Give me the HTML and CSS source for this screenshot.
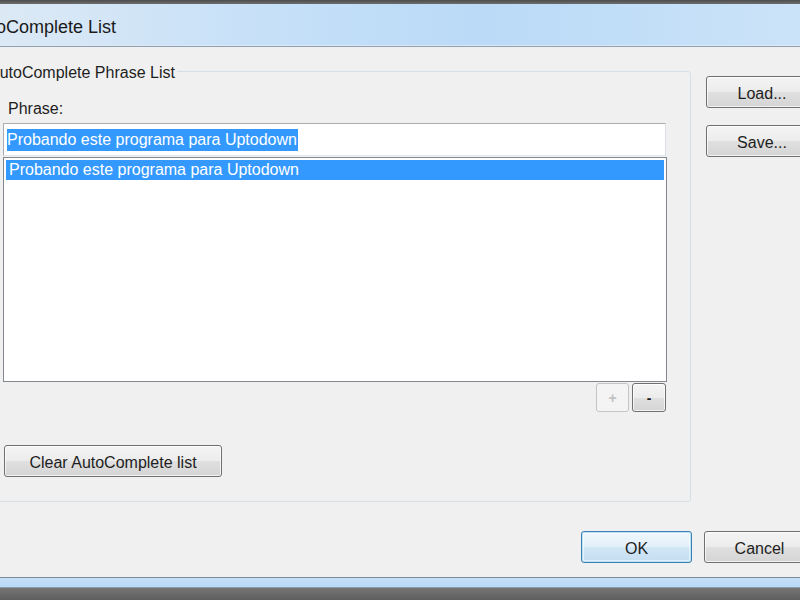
FILE: index.html
```html
<!DOCTYPE html>
<html>
<head>
<meta charset="utf-8">
<link rel="stylesheet" href="styles.css">
</head>
<body>
<div class="frame-top"></div>
<div class="titlebar"><span class="title">AutoComplete List</span></div>
<div class="client">
  <div class="main">
    <fieldset class="group">
      <legend class="group-label">AutoComplete Phrase List</legend>
      <div class="field-label">Phrase:</div>
      <div class="textbox"><span class="sel">Probando este programa para Uptodown</span></div>
      <div class="listbox">
        <div class="list-item selected">Probando este programa para Uptodown</div>
      </div>
      <div class="pm-row">
        <button class="btn small disabled">+</button>
        <button class="btn small">-</button>
      </div>
      <button class="btn clear">Clear AutoComplete list</button>
    </fieldset>
    <div class="side">
      <button class="btn side-btn">Load...</button>
      <button class="btn side-btn">Save...</button>
    </div>
  </div>
  <div class="footer">
    <button class="btn foot-btn default">OK</button>
    <button class="btn foot-btn">Cancel</button>
  </div>
</div>
<div class="frame-bottom"></div>
</body>
</html>
```
FILE: styles.css
```css
html, body {
  margin: 0;
  padding: 0;
}
body {
  width: 800px;
  height: 600px;
  overflow: hidden;
  display: flex;
  flex-direction: column;
  background: #f0f0f0;
  font-family: "Liberation Sans", Arial, sans-serif;
  font-size: 16px;
  color: #1e1e1e;
}
.frame-top {
  height: 4px;
  background: linear-gradient(#4d4d4d, #6d6d6d);
  flex: none;
}
.titlebar {
  height: 42px;
  flex: none;
  display: flex;
  align-items: center;
  background: linear-gradient(to right, #dce9f5 0%, #c8e1f8 30%, #badaf7 60%, #cbe3f8 100%);
  border-bottom: 1px solid #8fa0b3;
  box-shadow: inset 0 -1px 0 #dfe9f3;
}
.title {
  margin-left: -31px;
  font-size: 18px;
  padding-top: 4px;
  color: #1a1a1a;
}
.client {
  flex: 1;
  display: flex;
  flex-direction: column;
  padding-top: 13px;
}
.main {
  display: flex;
  gap: 15px;
}
.group {
  margin: 0 0 0 -18px;
  width: 709px;
  box-sizing: border-box;
  border: 1px solid #d5dfe5;
  border-radius: 3px;
  padding: 16px 23px 24px 20px;
  display: flex;
  flex-direction: column;
  align-items: flex-start;
}
.group-label {
  margin-left: -16px;
  padding: 3px 2px 0;
  line-height: 20px;
}
.field-label {
  margin-left: 5px;
  line-height: 20px;
  margin-bottom: 4px;
}
.textbox {
  width: 663px;
  height: 33px;
  box-sizing: border-box;
  background: #fff;
  border: 1px solid #abadb3;
  border-right-color: #dbdfe6;
  border-bottom-color: #e3e9ef;
  padding: 4px 3px;
  display: flex;
  align-items: center;
}
.sel {
  background: #3399ff;
  color: #fff;
  line-height: 22px;
  padding-right: 1px;
}
.listbox {
  margin-top: 1px;
  width: 664px;
  height: 225px;
  box-sizing: border-box;
  background: #fff;
  border: 1px solid #828790;
  padding: 2px 2px;
}
.list-item {
  height: 20px;
  line-height: 20px;
  padding-left: 3px;
}
.list-item.selected {
  background: #3399ff;
  color: #fff;
}
.btn {
  font-family: inherit;
  font-size: 16px;
  color: #1e1e1e;
  border: 1px solid #707070;
  border-radius: 3px;
  background: linear-gradient(#f4f4f4 0%, #ececec 50%, #e0e0e0 51%, #d4d4d4 100%);
  box-shadow: inset 0 0 0 1px rgba(255,255,255,0.7);
  padding: 4px 0 0;
  margin: 0;
}
.pm-row {
  align-self: flex-end;
  margin-top: 1px;
  margin-right: 1px;
  display: flex;
  gap: 3px;
}
.btn.small {
  width: 34px;
  height: 29px;
  font-size: 14px;
  font-weight: bold;
  line-height: 1;
  padding: 0;
}
.btn.small.disabled {
  width: 33px;
  border-color: #c4c4c4;
  background: #f4f4f4;
  color: #c2c2c2;
  box-shadow: none;
}
.btn.clear {
  margin-top: 33px;
  margin-left: 1px;
  width: 218px;
  height: 32px;
}
.side {
  display: flex;
  flex-direction: column;
  gap: 17px;
  padding-top: 16px;
}
.side-btn {
  width: 112px;
  height: 32px;
}
.footer {
  display: flex;
  justify-content: flex-end;
  gap: 12px;
  margin-top: 29px;
  margin-right: -15px;
}
.foot-btn {
  width: 111px;
  height: 32px;
}
.foot-btn.default {
  border-color: #3c7fb1;
  box-shadow: inset 0 0 0 1px #b8e2f9, inset 0 0 0 2px rgba(255,255,255,0.5);
  background: linear-gradient(#eef6fc 0%, #e3f0f9 50%, #d2e7f6 51%, #c3ddf0 100%);
}
.frame-bottom {
  flex: none;
  height: 22px;
  border-top: 1px solid #7c8c9c;
  background: linear-gradient(#c4dff7 0px, #b9d9f7 9px, #8a9bad 9px, #8a9bad 10px, #767676 10px, #5e5e5e 100%);
}
```
